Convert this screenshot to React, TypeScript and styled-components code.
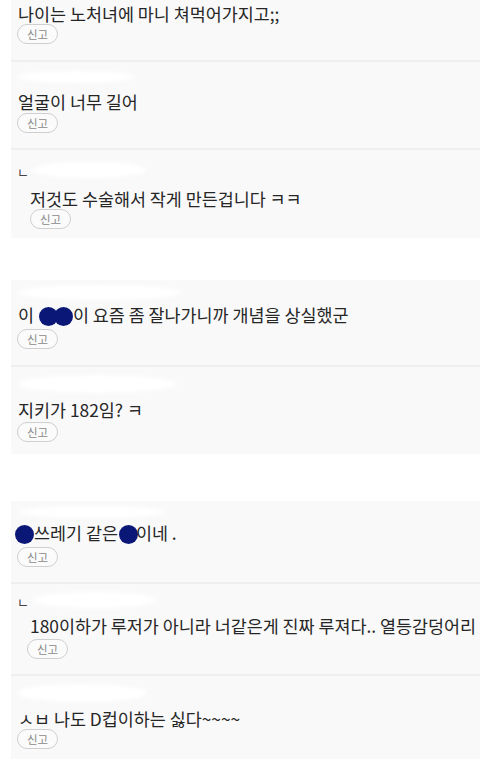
import React from "react";
import styled, { createGlobalStyle } from "styled-components";

const Global = createGlobalStyle`
  html, body { margin: 0; padding: 0; background: #ffffff; }
  body { font-family: "Noto Sans CJK KR", "Noto Sans", sans-serif; }
`;

const Page = styled.div`
  width: 480px;
  height: 762px;
  overflow: hidden;
  display: flex;
  flex-direction: column;
  background: #ffffff;
`;

const Group = styled.section<{ $gap: number }>`
  margin-left: 11px;
  margin-bottom: ${(p) => p.$gap}px;
  background: #f9f9f9;
  display: flex;
  flex-direction: column;
`;

const Row = styled.div<{ $top: number; $bottom: number; $last?: boolean }>`
  padding: ${(p) => p.$top}px 0 ${(p) => p.$bottom}px 0;
  border-bottom: ${(p) => (p.$last ? "none" : "2px solid #efefef")};
  display: flex;
  flex-direction: column;
`;

const NickLine = styled.div<{ $h: number }>`
  height: ${(p) => p.$h}px;
  display: flex;
  align-items: center;
  padding-left: 6px;
  gap: 3px;
`;

const ReplyMark = styled.span`
  font-size: 13px;
  color: #444;
  line-height: 1;
  margin-top: 3px;
`;

const Blur = styled.span<{ $w: number; $h: number }>`
  display: inline-block;
  width: ${(p) => p.$w}px;
  height: ${(p) => p.$h}px;
  border-radius: 50%;
  background: #ffffff;
  filter: blur(2px);
`;

const Body = styled.div<{ $indent: number }>`
  padding-left: ${(p) => p.$indent}px;
  display: flex;
  flex-direction: column;
  align-items: flex-start;
`;

const Text = styled.p`
  margin: 0;
  font-size: 17.4px;
  line-height: 20px;
  color: #262626;
  white-space: nowrap;
`;

const Dot = styled.span<{ $ml?: number; $mr?: number }>`
  display: inline-block;
  width: 19px;
  height: 19px;
  border-radius: 50%;
  background: #0b1777;
  vertical-align: -4px;
  margin-left: ${(p) => p.$ml ?? 0}px;
  margin-right: ${(p) => p.$mr ?? 0}px;
`;

const Report = styled.button<{ $mt: number; $shift?: number }>`
  margin: ${(p) => p.$mt}px 0 0 ${(p) => p.$shift ?? 0}px;
  width: 41px;
  height: 20px;
  padding: 0;
  border: 1px solid #cfcfcf;
  border-radius: 10px;
  background: #fbfbfb;
  font-family: "Noto Sans CJK KR", sans-serif;
  font-size: 11.5px;
  line-height: 18px;
  color: #8a8a8a;
  box-sizing: border-box;
`;

export default function App() {
  return (
    <Page>
      <Global />
      <Group $gap={42}>
        <Row $top={4} $bottom={16}>
          <Body $indent={7}>
            <Text>나이는 노처녀에 마니 쳐먹어가지고;;</Text>
            <Report $mt={0} $shift={-1}>신고</Report>
          </Body>
        </Row>
        <Row $top={0} $bottom={15}>
          <NickLine $h={30}>
            <Blur $w={118} $h={12} />
          </NickLine>
          <Body $indent={7}>
            <Text>얼굴이 너무 길어</Text>
            <Report $mt={1} $shift={-1}>신고</Report>
          </Body>
        </Row>
        <Row $top={0} $bottom={9} $last>
          <NickLine $h={39}>
            <ReplyMark>ㄴ</ReplyMark>
            <Blur $w={115} $h={16} />
          </NickLine>
          <Body $indent={19}>
            <Text>저것도 수술해서 작게 만든겁니다 ㅋㅋ</Text>
            <Report $mt={0}>신고</Report>
          </Body>
        </Row>
      </Group>

      <Group $gap={47}>
        <Row $top={0} $bottom={16}>
          <NickLine $h={25}>
            <Blur $w={165} $h={15} />
          </NickLine>
          <Body $indent={7}>
            <Text>
              이 <Dot $ml={1} />
              <Dot $ml={-4} />이 요즘 좀 잘나가니까 개념을 상실했군
            </Text>
            <Report $mt={3} $shift={-1}>신고</Report>
          </Body>
        </Row>
        <Row $top={0} $bottom={12} $last>
          <NickLine $h={33}>
            <Blur $w={160} $h={18} />
          </NickLine>
          <Body $indent={7}>
            <Text>지키가 182임? ㅋ</Text>
            <Report $mt={2} $shift={-1}>신고</Report>
          </Body>
        </Row>
      </Group>

      <Group $gap={0}>
        <Row $top={0} $bottom={15}>
          <NickLine $h={22}>
            <Blur $w={150} $h={12} />
          </NickLine>
          <Body $indent={7}>
            <Text>
              <Dot $ml={-3} $mr={0} />쓰레기 같은<Dot $ml={1} $mr={-2} />이네 .
            </Text>
            <Report $mt={3} $shift={-1}>신고</Report>
          </Body>
        </Row>
        <Row $top={0} $bottom={15}>
          <NickLine $h={32}>
            <ReplyMark>ㄴ</ReplyMark>
            <Blur $w={125} $h={16} />
          </NickLine>
          <Body $indent={19}>
            <Text>180이하가 루저가 아니라 너같은게 진짜 루져다.. 열등감덩어리</Text>
            <Report $mt={3} $shift={-3}>신고</Report>
          </Body>
        </Row>
        <Row $top={0} $bottom={10} $last>
          <NickLine $h={33}>
            <Blur $w={130} $h={18} />
          </NickLine>
          <Body $indent={7}>
            <Text>ㅅㅂ 나도 D컵이하는 싫다~~~~</Text>
            <Report $mt={0} $shift={-1}>신고</Report>
          </Body>
        </Row>
      </Group>
    </Page>
  );
}
